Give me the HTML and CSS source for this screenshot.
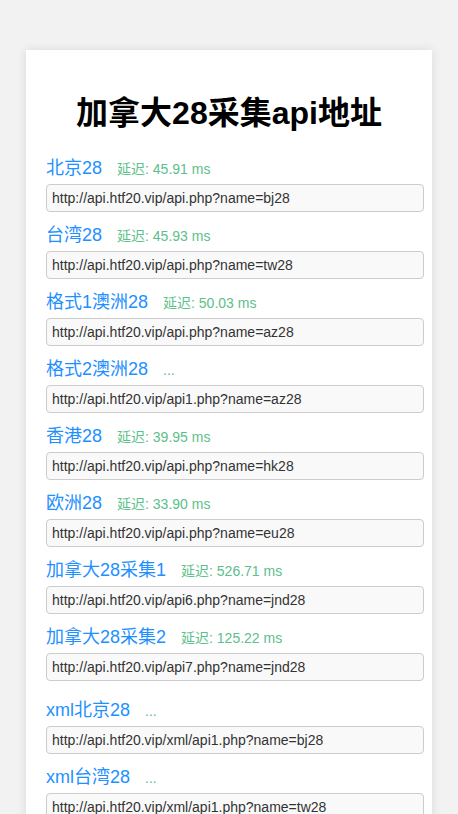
FILE: index.html
```html
<!DOCTYPE html>
<html lang="zh-CN">
  <head>
    <meta charset="utf-8" />
    <meta name="viewport" content="width=device-width, initial-scale=1" />
    <title>加拿大28采集api地址</title>
    <link rel="stylesheet" href="styles.css">
  </head>
  <body>
    <div class="box">
      <h1>加拿大28采集api地址</h1>
      <div class="item">
        <div class="name">北京28<span class="ping">延迟: 45.91 ms</span></div>
        <input class="url" type="text" readonly value="http://api.htf20.vip/api.php?name=bj28" />
      </div>
      <div class="item">
        <div class="name">台湾28<span class="ping">延迟: 45.93 ms</span></div>
        <input class="url" type="text" readonly value="http://api.htf20.vip/api.php?name=tw28" />
      </div>
      <div class="item">
        <div class="name">格式1澳洲28<span class="ping">延迟: 50.03 ms</span></div>
        <input class="url" type="text" readonly value="http://api.htf20.vip/api.php?name=az28" />
      </div>
      <div class="item">
        <div class="name">格式2澳洲28<span class="ping">...</span></div>
        <input class="url" type="text" readonly value="http://api.htf20.vip/api1.php?name=az28" />
      </div>
      <div class="item">
        <div class="name">香港28<span class="ping">延迟: 39.95 ms</span></div>
        <input class="url" type="text" readonly value="http://api.htf20.vip/api.php?name=hk28" />
      </div>
      <div class="item">
        <div class="name">欧洲28<span class="ping">延迟: 33.90 ms</span></div>
        <input class="url" type="text" readonly value="http://api.htf20.vip/api.php?name=eu28" />
      </div>
      <div class="item">
        <div class="name">加拿大28采集1<span class="ping">延迟: 526.71 ms</span></div>
        <input class="url" type="text" readonly value="http://api.htf20.vip/api6.php?name=jnd28" />
      </div>
      <div class="item">
        <div class="name">加拿大28采集2<span class="ping">延迟: 125.22 ms</span></div>
        <input class="url" type="text" readonly value="http://api.htf20.vip/api7.php?name=jnd28" />
      </div>
      <div class="group">
        <div class="item">
          <div class="name">xml北京28<span class="ping">...</span></div>
          <input class="url" type="text" readonly value="http://api.htf20.vip/xml/api1.php?name=bj28" />
        </div>
        <div class="item">
          <div class="name">xml台湾28<span class="ping">...</span></div>
          <input class="url" type="text" readonly value="http://api.htf20.vip/xml/api1.php?name=tw28" />
        </div>
      </div>
    </div>
  </body>
</html>
```

FILE: styles.css
```css
body {
  margin: 0;
  background-color: #f2f2f2;
  font-family: "Liberation Sans", Arial, "Noto Sans CJK SC", sans-serif;
}
.box {
  margin: 50px 26px 0;
  padding: 20px;
  background-color: #fff;
  box-shadow: 0 0 10px rgba(0, 0, 0, 0.1);
}
h1 {
  margin: 25px 0 24px;
  font-size: 32px;
  line-height: 37px;
  text-align: center;
  color: #000;
}
.item {
  margin-bottom: 11px;
}
.name {
  height: 24px;
  line-height: 24px;
  margin-bottom: 4px;
  font-size: 18px;
  color: #1e90ff;
}
.ping {
  margin-left: 15px;
  font-size: 14px;
  color: #5cc08a;
}
.url {
  display: block;
  width: 100%;
  padding: 5px;
  border: 1px solid #ccc;
  border-radius: 4px;
  background-color: #f9f9f9;
  font-family: "Liberation Sans", Arial, sans-serif;
  font-size: 14px;
  line-height: 16px;
  color: #333;
  outline: none;
}
.group {
  margin-top: 17px;
}
```
